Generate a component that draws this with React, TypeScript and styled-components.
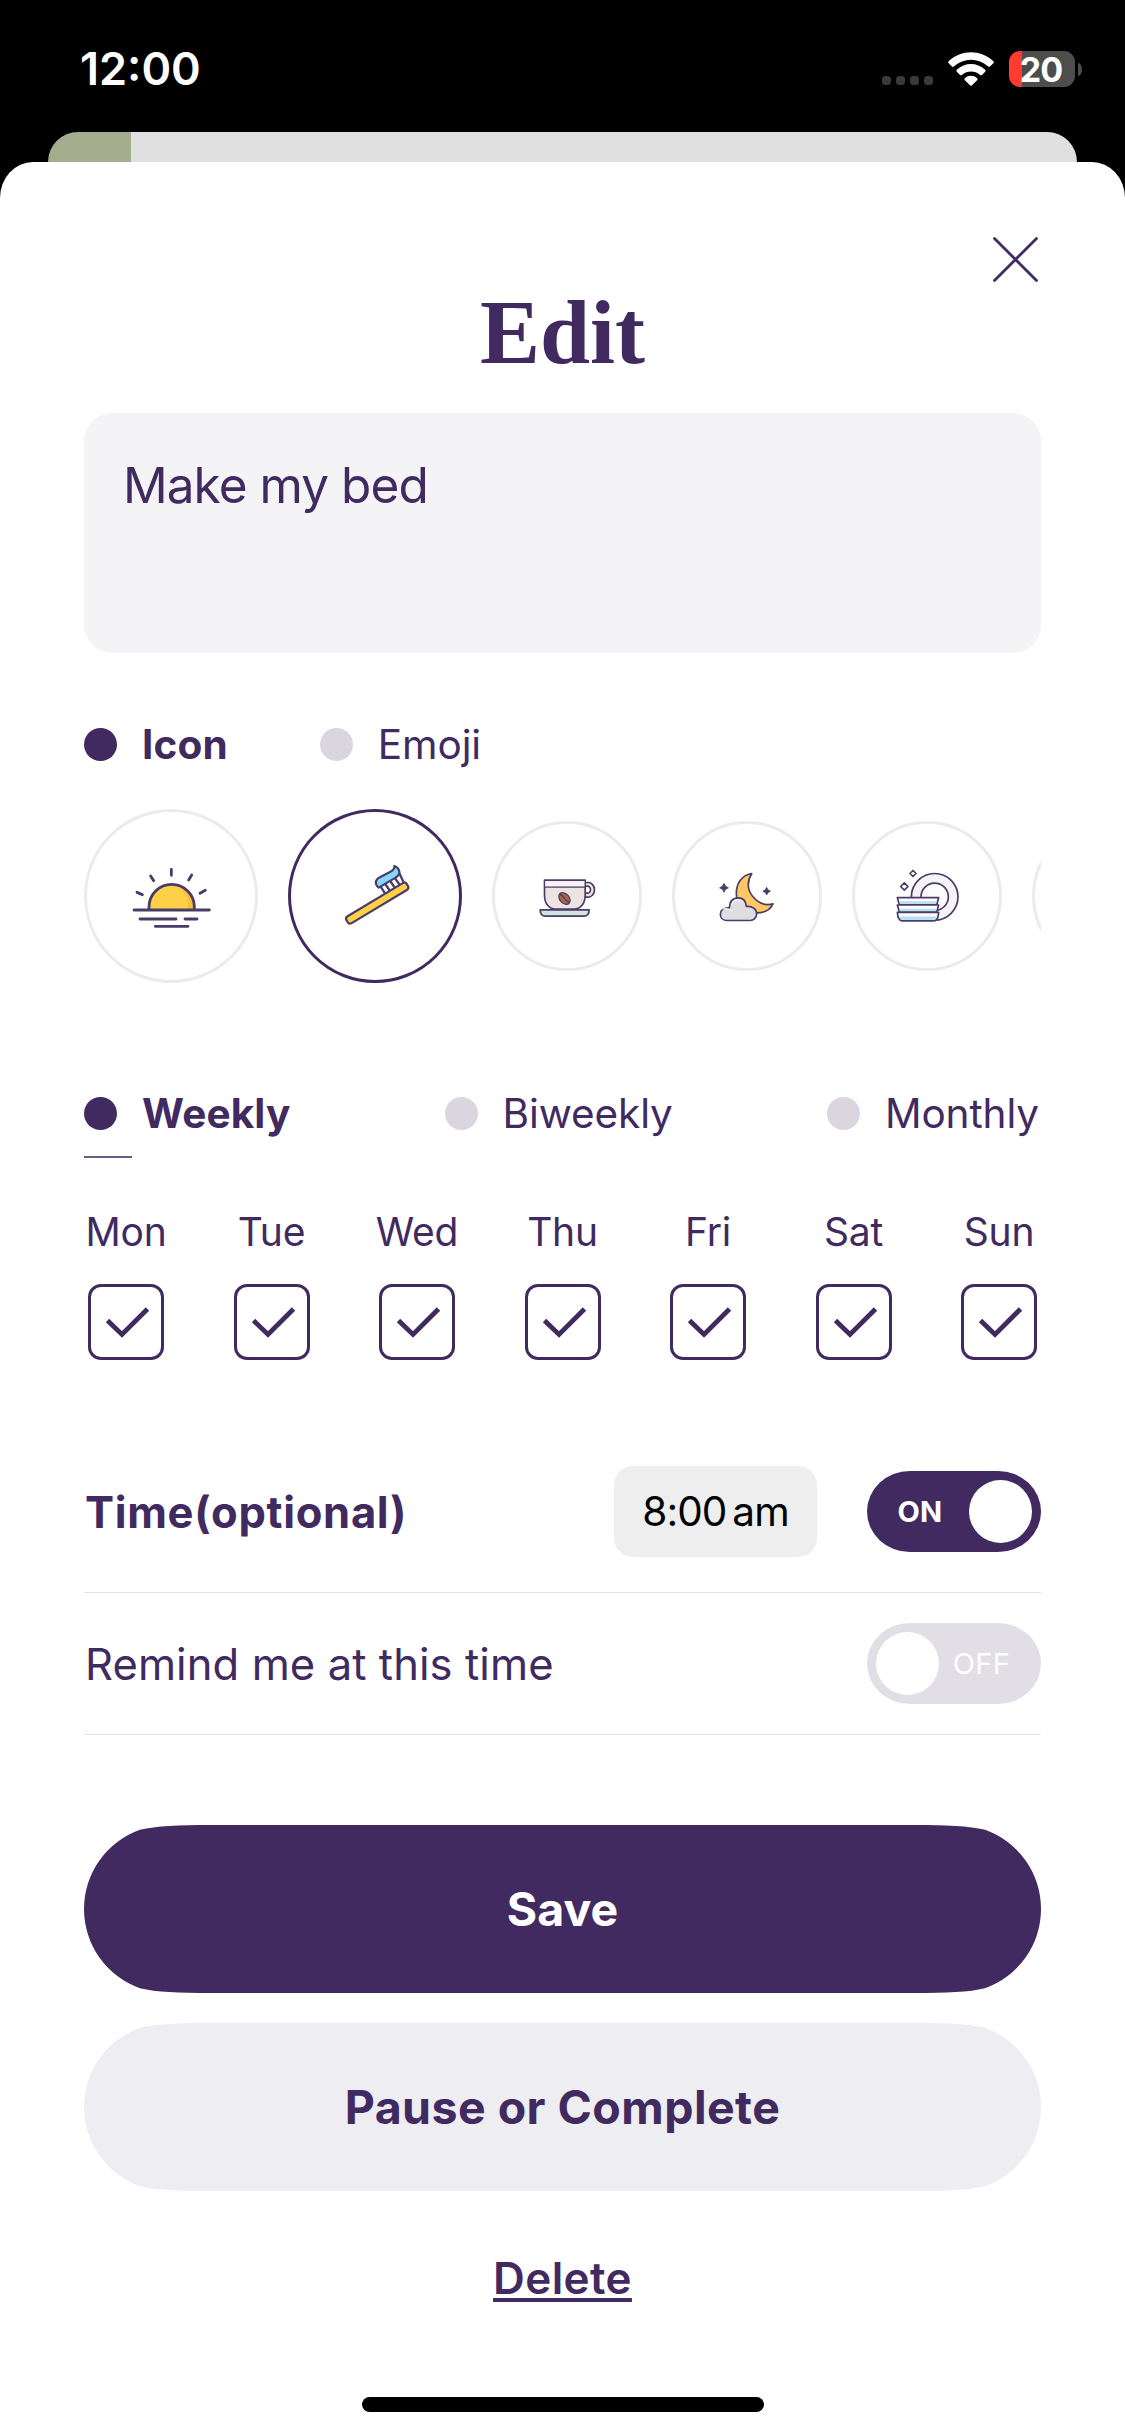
import React, { useState } from 'react';
import styled, { createGlobalStyle, css } from 'styled-components';

const ink = '#412a5f';
const outline = '#4a3c69';

const GlobalStyle = createGlobalStyle`
  *, *::before, *::after { box-sizing: border-box; }
  body { margin: 0; background: #000; }
  button { border: 0; padding: 0; background: none; font: inherit; color: inherit; }
`;

const Screen = styled.div`
  width: 1125px;
  height: 2436px;
  overflow: hidden;
  display: flex;
  flex-direction: column;
  background: #000;
  color: ${ink};
  font-family: Inter, 'Liberation Sans', sans-serif;
`;

const StatusBar = styled.header`
  height: 132px;
  flex: none;
  display: flex;
  justify-content: space-between;
  padding: 39px 43px 0 80px;
  color: #fff;
`;

const Clock = styled.span`
  height: 60px;
  line-height: 60px;
  font-size: 45px;
  font-weight: 600;
  letter-spacing: 0;
`;

const Indicators = styled.div`
  height: 60px;
  display: flex;
  align-items: center;
`;

const SignalDots = styled.div`
  display: flex;
  gap: 5px;
  margin: 23px 15px 0 0;
`;

const SignalDot = styled.i`
  width: 9px;
  height: 9px;
  border-radius: 3.5px;
  background: #3a3a3a;
`;

const WifiGlyph = styled.svg`
  width: 46px;
  height: 34px;
  margin-right: 15px;
`;

const Battery = styled.div`
  width: 66px;
  height: 36px;
  border-radius: 11px;
  background: linear-gradient(90deg, #ff3b30 13px, #4d4d4d 13px);
  display: flex;
  align-items: center;
  justify-content: center;
  font-size: 34px;
  font-weight: 700;
  letter-spacing: -0.8px;
  padding-right: 2px;
`;

const BatteryTip = styled.i`
  width: 4px;
  height: 13px;
  margin-left: 3px;
  border-radius: 0 4px 4px 0 / 0 7px 7px 0;
  background: #4d4d4d;
`;

const BackCard = styled.div`
  height: 30px;
  flex: none;
  margin: 0 48px;
  border-radius: 30px 30px 0 0;
  background: linear-gradient(90deg, #a4ad8e 83px, #e0e0e0 83px);
`;

const Sheet = styled.main`
  flex: 1;
  display: flex;
  flex-direction: column;
  padding: 75px 84px 0;
  border-radius: 33px 33px 0 0 / 36px 36px 0 0;
  background: #fff;
`;

const CloseButton = styled.button`
  align-self: flex-end;
  width: 45px;
  height: 45px;
  margin-right: 3px;

  svg { display: block; width: 45px; height: 45px; }
`;

const Title = styled.h1`
  margin: 3px 0 32px;
  height: 96px;
  line-height: 96px;
  text-align: center;
  font-family: 'Liberation Serif', serif;
  font-size: 90px;
  font-weight: 700;
`;

const TaskField = styled.div`
  height: 240px;
  padding: 42px 39px;
  border-radius: 28px;
  background: #f4f3f6;
  font-size: 49.5px;
  line-height: 60px;
  letter-spacing: -0.95px;
`;

const RadioGroup = styled.div<{ $top: number; $spread?: boolean }>`
  display: flex;
  height: 33px;
  margin-top: ${p => p.$top}px;
  padding-right: 2px;
  gap: ${p => (p.$spread ? 0 : 92)}px;
  justify-content: ${p => (p.$spread ? 'space-between' : 'flex-start')};
`;

const RadioOption = styled.button<{ $active: boolean }>`
  display: flex;
  align-items: center;
  gap: 25px;
  font-size: 40.5px;
  line-height: 33px;
  font-weight: ${p => (p.$active ? 700 : 400)};
  letter-spacing: ${p => (p.$active ? '0.15px' : '-0.1px')};
  white-space: nowrap;

  &::before {
    content: '';
    width: 33px;
    height: 33px;
    border-radius: 50%;
    background: ${p => (p.$active ? ink : '#dad5df')};
  }
`;

const IconCarousel = styled.div`
  display: flex;
  align-items: center;
  gap: 30px;
  height: 174px;
  margin-top: 48px;
  overflow: hidden;
`;

const IconChoice = styled.button<{ $large?: boolean; $selected?: boolean }>`
  flex: none;
  display: flex;
  align-items: center;
  justify-content: center;
  width: ${p => (p.$large ? 174 : 150)}px;
  height: ${p => (p.$large ? 174 : 150)}px;
  border: 3px solid ${p => (p.$selected ? ink : '#ebebed')};
  border-radius: 50%;

  svg { width: 80px; height: 80px; }
`;

const TabMarker = styled.div`
  width: 48px;
  height: 2px;
  margin-top: 26px;
  background: #6a5c86;
`;

const DayRow = styled.div`
  display: flex;
  justify-content: space-between;
  margin-top: 50px;
`;

const Day = styled.label`
  width: 84px;
  display: flex;
  flex-direction: column;
  align-items: center;
  gap: 28px;
  font-size: 39px;
  line-height: 48px;
  letter-spacing: -0.2px;
  white-space: nowrap;
`;

const CheckBox = styled.button`
  width: 76px;
  height: 76px;
  border: 3px solid ${ink};
  border-radius: 13px;

  svg { display: block; width: 70px; height: 70px; }
`;

const SettingRow = styled.div<{ $height: number; $top?: number }>`
  display: flex;
  align-items: center;
  height: ${p => p.$height}px;
  margin-top: ${p => p.$top ?? 0}px;
  border-bottom: 1px solid #e2e2e4;
`;

const SettingLabel = styled.span<{ $strong?: boolean }>`
  flex: 1;
  padding-left: 1px;
  font-size: 43.5px;
  line-height: 60px;
  ${p => p.$strong
    ? css`font-weight: 700; letter-spacing: 0.7px;`
    : css`font-weight: 400; letter-spacing: 0.1px;`}
`;

const TimePill = styled.button`
  display: flex;
  align-items: center;
  justify-content: center;
  gap: 6px;
  width: 203px;
  height: 91px;
  margin-right: 50px;
  border-radius: 19px;
  background: #eeeeef;
  color: #000;
  font-size: 40.5px;
  letter-spacing: -0.95px;
`;

const Toggle = styled.button<{ $on: boolean }>`
  display: flex;
  flex-direction: ${p => (p.$on ? 'row' : 'row-reverse')};
  align-items: center;
  width: 174px;
  height: 81px;
  padding: 0 9px;
  border-radius: 43px / 40.5px;
  background: ${p => (p.$on ? ink : '#e1dee5')};
  color: #fff;
  font-size: 29px;
  font-weight: ${p => (p.$on ? 700 : 400)};
  letter-spacing: 0.4px;

  span {
    flex: 1;
    text-align: center;
    padding-right: ${p => (p.$on ? 5 : 8)}px;
  }

  &::after {
    content: '';
    width: 63px;
    height: 63px;
    border-radius: 50%;
    background: #fff;
  }
`;

const Actions = styled.div`
  display: flex;
  flex-direction: column;
  gap: 30px;
  margin-top: 90px;
`;

const ActionButton = styled.button<{ $primary?: boolean }>`
  height: 168px;
  clip-path: path('M0 84 A84 84 0 0 1 56 4.8 C72 0.9 95 0 126 0 H831 C862 0 885 0.9 901 4.8 A84 84 0 0 1 901 163.2 C885 167.1 862 168 831 168 H126 C95 168 72 167.1 56 163.2 A84 84 0 0 1 0 84 Z');
  background: ${p => (p.$primary ? ink : '#eeedf2')};
  color: ${p => (p.$primary ? '#fff' : ink)};
  font-size: 46.5px;
  font-weight: 700;
  letter-spacing: ${p => (p.$primary ? 0 : 0.45)}px;
`;

const DeleteLink = styled.button`
  align-self: center;
  margin-top: 57px;
  height: 60px;
  line-height: 60px;
  font-size: 44px;
  font-weight: 600;
  letter-spacing: 0.4px;
  text-decoration: underline;
  text-decoration-thickness: 4px;
  text-underline-offset: 4px;
`;

const HomeIndicator = styled.div`
  align-self: center;
  width: 402px;
  height: 15px;
  margin-top: 89px;
  border-radius: 8px;
  background: #000;
`;

const Wifi = () => (
  <WifiGlyph viewBox="325 95 136 100" fill="#fff">
    <path d="M327 122 C365 87 421 87 459 122 Q462 125 459 128 L450 137 Q447 140 443 137 C415 111 371 111 343 137 Q339 140 336 137 L327 128 Q324 125 327 122Z" />
    <path d="M351 147 C375 125 411 125 435 147 Q438 150 435 153 L426 162 Q423 165 419 162 C404 149 382 149 367 162 Q363 165 360 162 L351 153 Q348 150 351 147Z" />
    <path d="M375 172 C386 163 400 163 411 172 Q414 175 411 178 L396 193 Q393 196 390 193 L375 178 Q372 175 375 172Z" />
  </WifiGlyph>
);

const SunriseIcon = () => (
  <svg viewBox="183 198 240 240" fill="none" stroke={outline} strokeWidth="8.5" strokeLinecap="round">
    <path d="M237 358 V352 A68 68 0 0 1 373 352 V358Z" fill="#fdd045" stroke="none" />
    <path d="M325 291 C350 308 358 332 352 358 H373 V350 C372 318 352 296 325 291Z" fill="#fbbd3c" stroke="none" />
    <path d="M237 357 V351 A68 68 0 0 1 373 351 V357" />
    <path d="M192 360 H418 M210 387 H318 M345 387 H381 M256 409 H354" />
    <path d="M304 238 V256 M242 258 L251 272 M365 255 L356 270 M201 307 L217 314 M406 301 L390 310" />
  </svg>
);

const ToothbrushIcon = () => (
  <svg viewBox="796 198 240 240" fill="none" stroke={outline} strokeWidth="6.5" strokeLinecap="round" strokeLinejoin="round">
    <path d="M932 288 L944 308 L1004 273 L990 250Z" fill="#fff" stroke="none" />
    <path d="M932 288 L944 307 M948 284 L959 300 M963 275 L974 291 M977 266 L989 283 M989 250 L1000 273" strokeWidth="7" />
    <path d="M927 293 C915 284 916 270 928 263 L961 246 C971 241 975 236 974 228 C989 234 993 247 985 257 L978 263Z" fill="#86d8fa" />
    <rect x="817" y="327" width="211" height="24" rx="9" transform="rotate(-31 923 339)" fill="#fdd045" />
  </svg>
);

const CoffeeIcon = () => (
  <svg viewBox="141.5 167.5 240 240" fill="none" stroke={outline} strokeWidth="5" strokeLinejoin="round">
    <path d="M316 247 H325 A19 22 0 0 1 325 291 H313 V279 H322 A10 10.500 0 0 0 322 258 H316Z" fill="#ede3e1" />
    <path d="M194 240 H316 V285 C316 310 302 327 283 327 H227 C208 327 194 310 194 285Z" fill="#ede3e1" />
    <path d="M196.500 242.500 H313.500 V259 H196.500Z" fill="#f8f3f2" stroke="none" />
    <path d="M194 261 H316" strokeWidth="4" />
    <path d="M181 329 H328 C328 342 322 348 312 348 H197 C187 348 181 342 181 329Z" fill="#d2e3e1" />
    <ellipse cx="254" cy="295" rx="14" ry="20" transform="rotate(-42 254 295)" fill="#a8673f" strokeWidth="4" />
    <path d="M241 283 C252 286 253 301 268 307" strokeWidth="4" />
  </svg>
);

const NightIcon = () => (
  <svg viewBox="682 167.5 240 240" fill="none" stroke={outline} strokeWidth="5" strokeLinejoin="round">
    <path d="M816 220 C785 226 770 250 770 280 C770 320 800 338 832 338 C855 338 872 328 880 311 C858 317 836 309 820 290 C802 268 803 242 816 220Z" fill="#fec864" />
    <path d="M742 361 C730 361 722 353 722 342 C722 330 732 322 749 323 C750 304 760 293 775 293 C790 293 799 303 800 319 C818 316 831 327 831 341 C831 353 822 361 811 361Z" fill="#dedee1" />
    <path d="M730 326 C742 325 752 328 756 333 M758 312 C762 300 775 295 788 305" stroke="#f1f1f3" strokeWidth="4" strokeLinecap="round" />
    <path d="M733 250 Q735.500 260.500 746 263 Q735.500 265.500 733 276 Q730.500 265.500 720 263 Q730.500 260.500 733 250Z M861 262 Q863 271 872 273 Q863 275 861 284 Q859 275 850 273 Q859 271 861 262Z" fill={outline} stroke={outline} strokeWidth="3" />
  </svg>
);

const plateTops = [292.5, 314.5];

const DishesIcon = () => (
  <svg viewBox="261 167.5 240 240" fill="none" stroke={outline} strokeWidth="5" strokeLinejoin="round">
    <circle cx="404" cy="290" r="70" fill="#f4f4f6" />
    <circle cx="404" cy="290" r="41" fill="#fbfbfc" />
    {plateTops.map(y => (
      <g key={y}>
        <path d={`M292 ${y} H416 L410 ${y + 21} H298Z`} fill="#fff" />
        <path d={`M298 ${y + 11} H410 L407 ${y + 19} H301Z`} fill="#b9e0f2" stroke="none" />
      </g>
    ))}
    <path d="M292 336.500 H416 C415 351 412 362 401 362 H307 C296 362 293 351 292 336.500Z" fill="#fff" />
    <path d="M298 349 H410 C408 355 406 359.500 400 359.500 H308 C302 359.500 300 355 298 349Z" fill="#b9e0f2" stroke="none" />
    <path d="M339 211 L348 220 L339 229 L330 220Z M313 248 L324 259 L313 270 L302 259Z" />
  </svg>
);

const dayNames = ['Mon', 'Tue', 'Wed', 'Thu', 'Fri', 'Sat', 'Sun'];
const frequencies = ['Weekly', 'Biweekly', 'Monthly'];
const smallIcons = [CoffeeIcon, NightIcon, DishesIcon];

export default function App() {
  const [kind, setKind] = useState('Icon');
  const [frequency, setFrequency] = useState('Weekly');
  const [days, setDays] = useState<string[]>(dayNames);
  const [timeOn, setTimeOn] = useState(true);
  const [remindOn, setRemindOn] = useState(false);

  const toggleDay = (day: string) =>
    setDays(list => (list.includes(day) ? list.filter(d => d !== day) : [...list, day]));

  return (
    <>
      <GlobalStyle />
      <Screen>
        <StatusBar>
          <Clock>12:00</Clock>
          <Indicators>
            <SignalDots>
              <SignalDot /><SignalDot /><SignalDot /><SignalDot />
            </SignalDots>
            <Wifi />
            <Battery>20</Battery>
            <BatteryTip />
          </Indicators>
        </StatusBar>
        <BackCard />
        <Sheet>
          <CloseButton aria-label="Close">
            <svg viewBox="0 0 45 45" stroke={ink} strokeWidth="2.8" strokeLinecap="round">
              <path d="M1.500 1.500 L43.500 43.500 M43.500 1.500 L1.500 43.500" />
            </svg>
          </CloseButton>
          <Title>Edit</Title>
          <TaskField>Make my bed</TaskField>

          <RadioGroup $top={75}>
            {['Icon', 'Emoji'].map(name => (
              <RadioOption key={name} $active={kind === name} onClick={() => setKind(name)}>{name}</RadioOption>
            ))}
          </RadioGroup>
          <IconCarousel>
            <IconChoice $large><SunriseIcon /></IconChoice>
            <IconChoice $large $selected><ToothbrushIcon /></IconChoice>
            {smallIcons.map((Glyph, i) => (
              <IconChoice key={i}><Glyph /></IconChoice>
            ))}
            <IconChoice />
          </IconCarousel>

          <RadioGroup $top={114} $spread>
            {frequencies.map(name => (
              <RadioOption key={name} $active={frequency === name} onClick={() => setFrequency(name)}>{name}</RadioOption>
            ))}
          </RadioGroup>
          <TabMarker />
          <DayRow>
            {dayNames.map(day => (
              <Day key={day}>
                {day}
                <CheckBox onClick={() => toggleDay(day)}>
                  {days.includes(day) && (
                    <svg viewBox="0 0 70 70" fill="none" stroke={ink} strokeWidth="4.8">
                      <path d="M16.500 33.500 L31 47.500 L56.500 22" />
                    </svg>
                  )}
                </CheckBox>
              </Day>
            ))}
          </DayRow>

          <SettingRow $height={162} $top={71}>
            <SettingLabel $strong>Time(optional)</SettingLabel>
            <TimePill><span>8:00</span><span>am</span></TimePill>
            <Toggle $on={timeOn} onClick={() => setTimeOn(v => !v)}><span>{timeOn ? 'ON' : 'OFF'}</span></Toggle>
          </SettingRow>
          <SettingRow $height={142}>
            <SettingLabel>Remind me at this time</SettingLabel>
            <Toggle $on={remindOn} onClick={() => setRemindOn(v => !v)}><span>{remindOn ? 'ON' : 'OFF'}</span></Toggle>
          </SettingRow>

          <Actions>
            <ActionButton $primary>Save</ActionButton>
            <ActionButton>Pause or Complete</ActionButton>
          </Actions>
          <DeleteLink>Delete</DeleteLink>
          <HomeIndicator />
        </Sheet>
      </Screen>
    </>
  );
}
